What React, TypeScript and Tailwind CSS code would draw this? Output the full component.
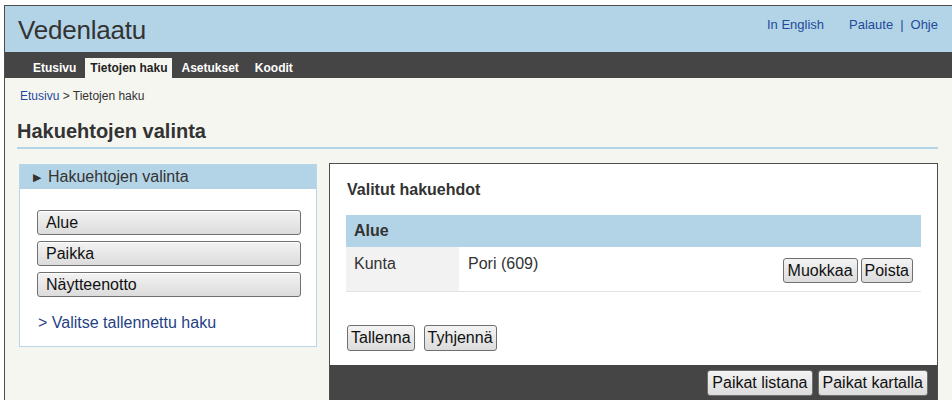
import React from 'react';

const btn =
  'rounded-[3px] border border-[#707070] bg-gradient-to-b from-[#f3f3f3] to-[#dcdcdc] text-[#111] leading-none';

function NavTab({ label, active }: { label: string; active?: boolean }) {
  return (
    <div
      className={
        active
          ? 'h-[20px] px-[5px] flex items-center bg-[#f6f6f1] text-[#222]'
          : 'h-[20px] px-[7px] flex items-center text-white'
      }
    >
      {label}
    </div>
  );
}

function SideButton({ label }: { label: string }) {
  return (
    <div
      className={`${btn} h-[25px] flex items-center pl-[8px] text-[16px] shadow-[inset_0_1px_0_#fff]`}
    >
      {label}
    </div>
  );
}

export default function App() {
  return (
    <div className="w-[952px] h-[400px] overflow-hidden bg-white font-['Liberation_Sans',Arial,sans-serif]">
      <div className="ml-[4px] mt-[5px] w-[960px] h-[400px] border-l border-t border-[#4d4d4d] bg-[#f6f6f1]">
        {/* header */}
        <div className="h-[46px] bg-[#b3d4e6] flex items-start justify-between">
          <div className="pl-[13px] pt-[5px] text-[26px] text-[#333] tracking-[-0.2px]">Vedenlaatu</div>
          <div className="flex pt-[9px] pr-[26px] text-[13px] text-[#1f4a9c]">
            <span>In English</span>
            <span className="ml-[25px]">Palaute</span>
            <span className="mx-[7px] text-[#1f4a9c]">|</span>
            <span>Ohje</span>
          </div>
        </div>

        {/* nav */}
        <div className="h-[26px] bg-[#454545] flex items-end pl-[21px] gap-[2px] text-[12px] font-bold">
          <NavTab label="Etusivu" />
          <NavTab label="Tietojen haku" active />
          <NavTab label="Asetukset" />
          <NavTab label="Koodit" />
        </div>

        {/* breadcrumb */}
        <div className="pl-[15px] pt-[9px] text-[12px] text-[#333]">
          <span className="text-[#1f4a9c]">Etusivu</span> &gt; Tietojen haku
        </div>

        <div className="pl-[12px] w-[933px]">
          <h1 className="mt-[14px] pb-[4px] leading-[24px] border-b-2 border-[#b3d4e6] text-[20px] font-bold text-[#333]">
            Hakuehtojen valinta
          </h1>

          <div className="flex items-start mt-[14px]">
            {/* left panel */}
            <div className="ml-[2px] mt-[1px] w-[298px] border border-[#b9d6e8] bg-white">
              <div className="h-[24px] bg-[#b3d4e6] flex items-center pl-[13px] text-[16px] text-[#333]">
                <span className="text-[11px] mr-[7px]">▶</span>
                Hakuehtojen valinta
              </div>
              <div className="pl-[17px] pr-[15px] pt-[21px] pb-[11px] flex flex-col gap-[6px]">
                <SideButton label="Alue" />
                <SideButton label="Paikka" />
                <SideButton label="Näytteenotto" />
                <div className="mt-[8px] pl-[1px] text-[16px] text-[#1f3f86]">&gt; Valitse tallennettu haku</div>
              </div>
            </div>

            {/* right panel */}
            <div className="ml-[12px] w-[609px] border border-[#4d4d4d] bg-white flex flex-col">
              <div className="pl-[17px] pr-[16px] pt-[14px] pb-[14px]">
                <div className="text-[16px] font-bold text-[#333]">Valitut hakuehdot</div>
                <div className="mt-[13px] w-[575px] -ml-[1px]">
                  <div className="h-[32px] bg-[#b3d4e6] flex items-center pl-[8px] text-[16px] font-bold text-[#333]">
                    Alue
                  </div>
                  <div className="h-[45px] flex border-b border-[#e2e2e2] text-[16px] text-[#333]">
                    <div className="w-[113px] bg-[#f2f2f2] pl-[8px] pt-[5px]">Kunta</div>
                    <div className="flex-1 pl-[9px] pt-[5px]">Pori (609)</div>
                    <div className="flex gap-[3px] pt-[11px] pr-[8px]">
                      <button className={`${btn} h-[25px] px-[4px] text-[16px]`}>Muokkaa</button>
                      <button className={`${btn} h-[25px] px-[3px] text-[16px]`}>Poista</button>
                    </div>
                  </div>
                </div>
                <div className="mt-[33px] flex gap-[9px]">
                  <button className={`${btn} h-[26px] px-[3px] text-[16px]`}>Tallenna</button>
                  <button className={`${btn} h-[26px] px-[3px] text-[16px]`}>Tyhjennä</button>
                </div>
              </div>
              <div className="h-[40px] bg-[#454545] flex items-start justify-end gap-[5px] pt-[5px] pr-[9px]">
                <button className={`${btn} h-[26px] px-[4px] text-[16px]`}>Paikat listana</button>
                <button className={`${btn} h-[26px] px-[4px] text-[16px]`}>Paikat kartalla</button>
              </div>
            </div>
          </div>
        </div>
      </div>
    </div>
  );
}
